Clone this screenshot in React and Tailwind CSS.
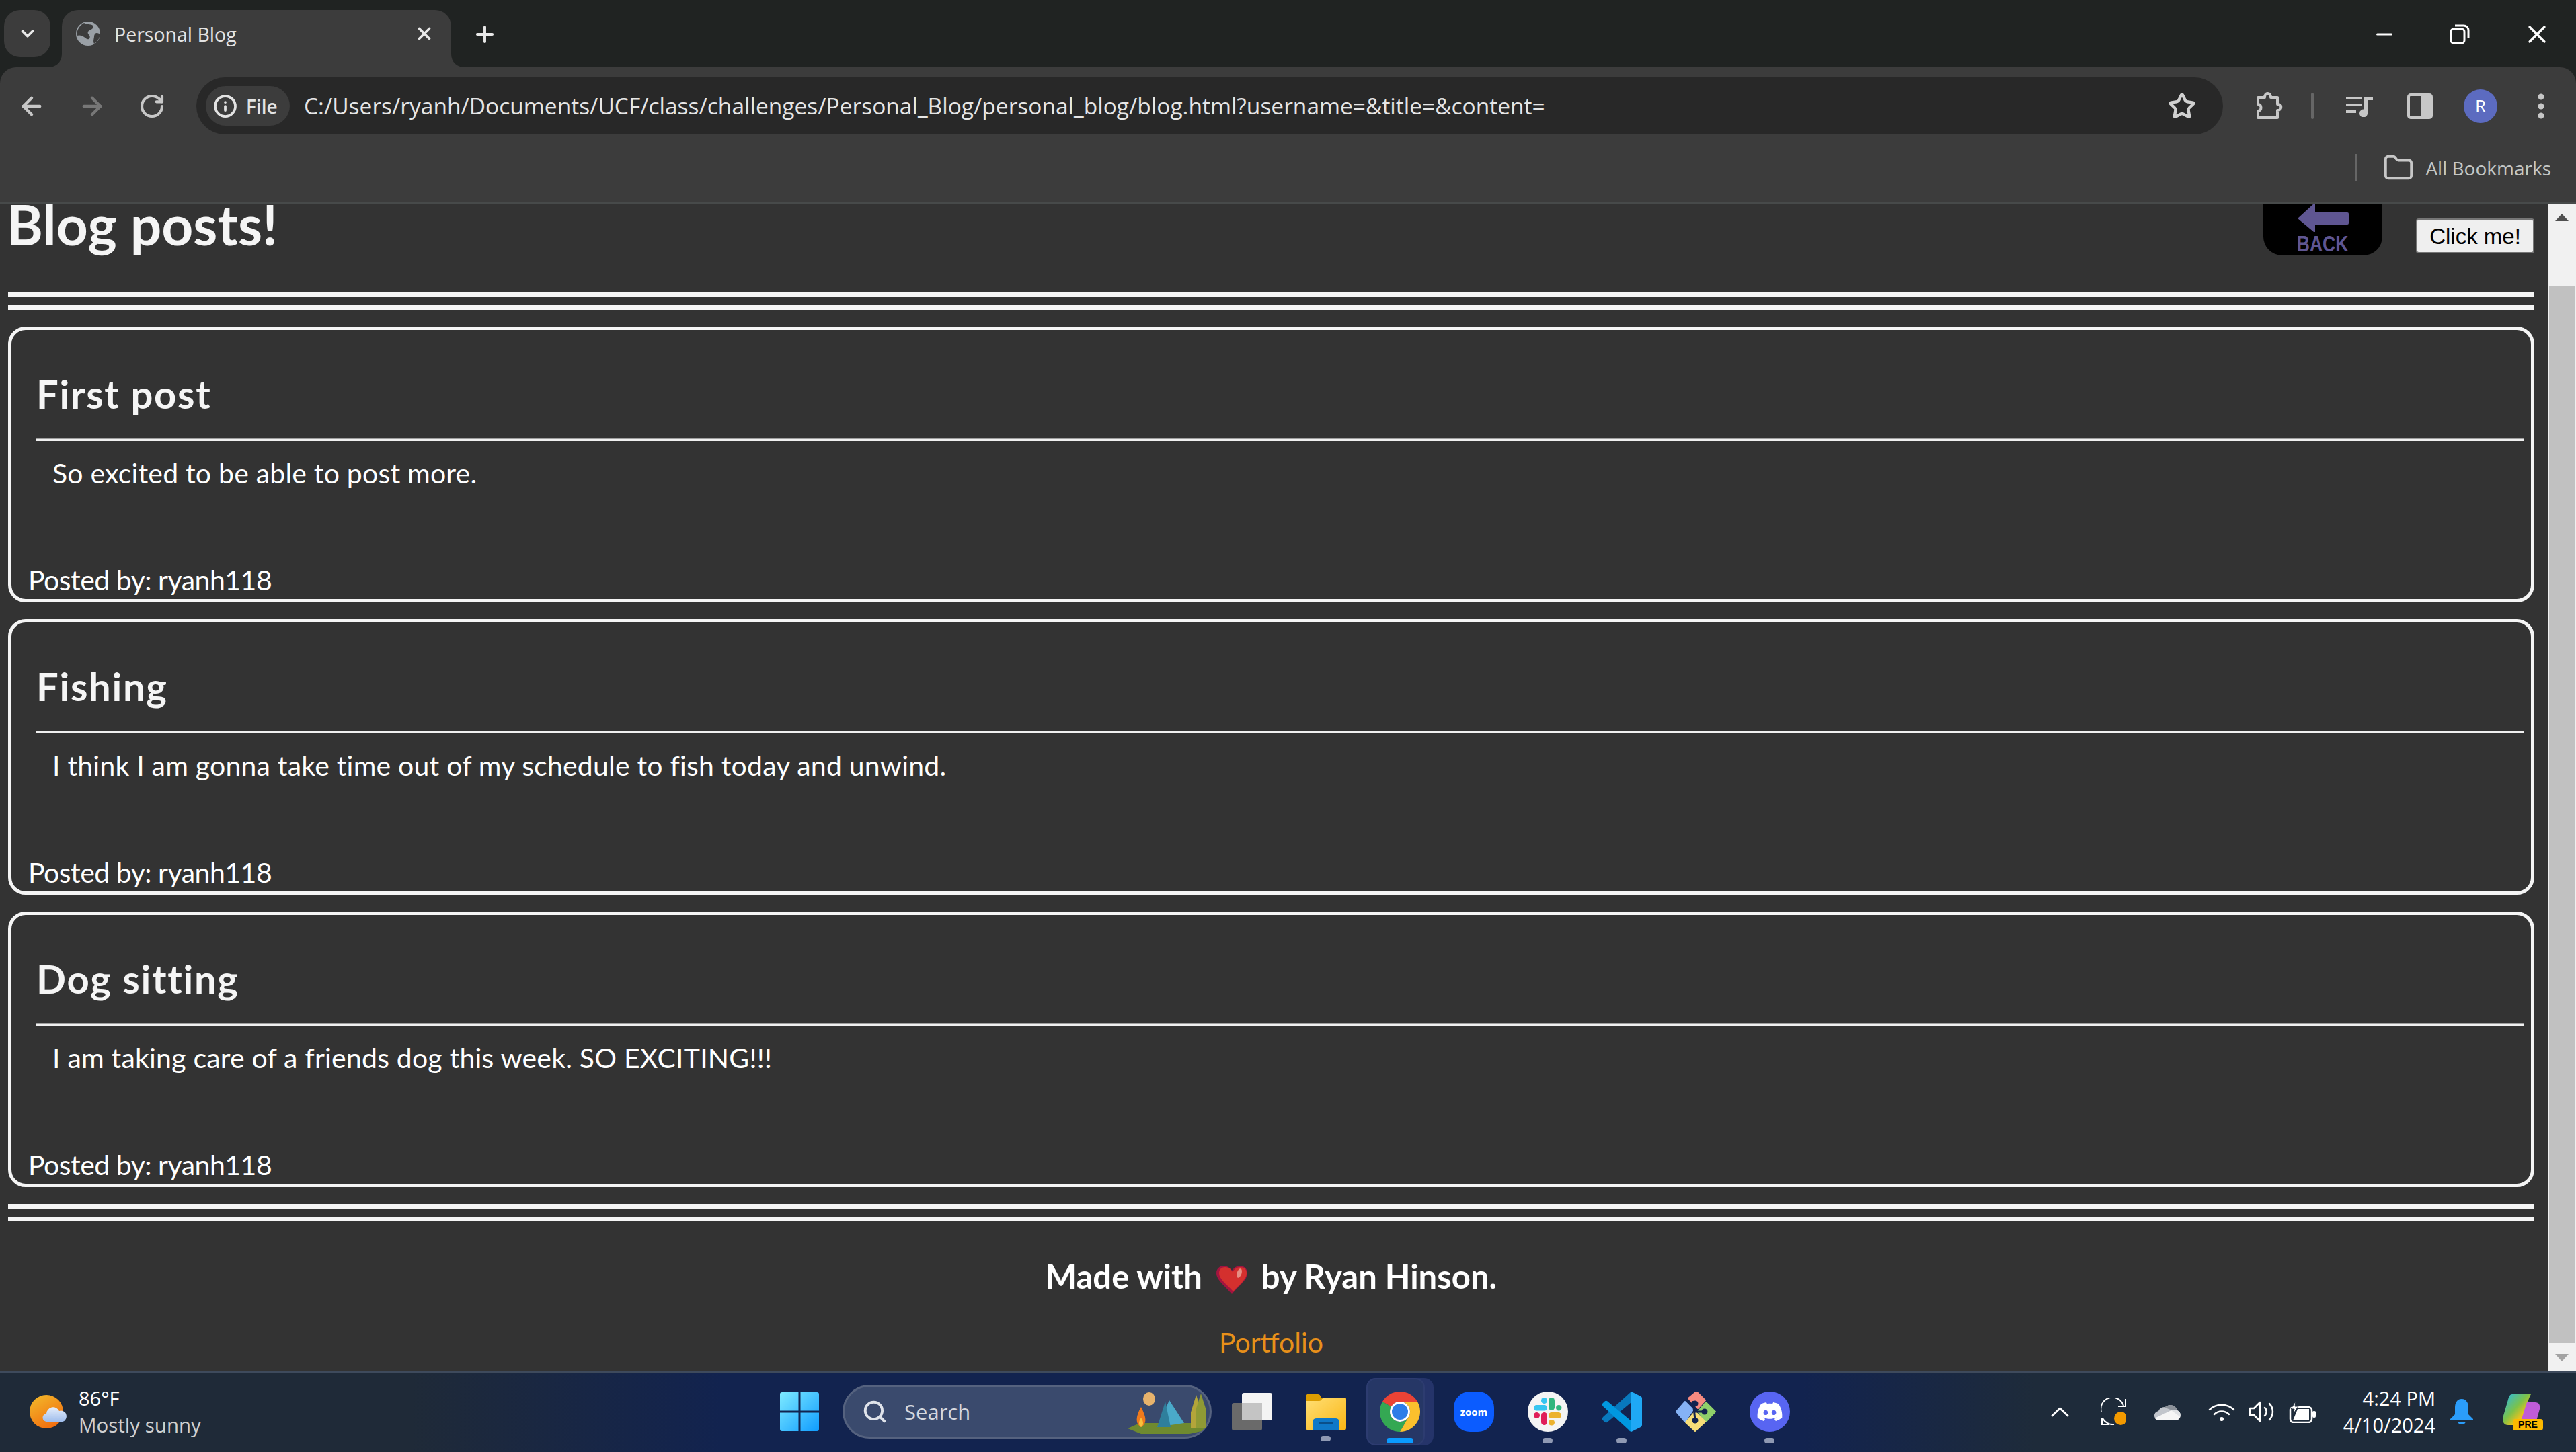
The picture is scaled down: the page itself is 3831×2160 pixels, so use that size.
import React from 'react';
import { ArrowLeft, ArrowRight, RotateCw, Info, Star, X, Plus, ChevronDown, Minus, Search, Folder } from 'lucide-react';
import { FaDiscord } from 'react-icons/fa';

const ui = { fontFamily: '"Open Sans", sans-serif' };

const posts = [
  { title: 'First post', body: 'So excited to be able to post more.' },
  { title: 'Fishing', body: 'I think I am gonna take time out of my schedule to fish today and unwind.' },
  { title: 'Dog sitting', body: 'I am taking care of a friends dog this week. SO EXCITING!!!' },
];

const Rule = () => <div className="h-[7px] bg-[#f5f5f5]" />;

const Post = ({ title, body }) => (
  <article className="h-[410px] border-[5px] border-[#f5f5f5] rounded-[26px] flex flex-col">
    <h2 className="ml-[37px] mt-[60px] text-[58px] leading-[70px] font-bold tracking-[1.7px] text-[#f5f5f5] font-['Lato',sans-serif]">{title}</h2>
    <div className="ml-[37px] mr-[11px] mt-[31px] h-[4px] bg-[#f0f0f0] border-t border-[#a0a0a0]" />
    <p className="ml-[61px] mt-[23px] text-[41px] leading-[50px] tracking-[0.2px] text-white font-['Lato',sans-serif]">{body}</p>
    <p className="mt-auto ml-[25px] mb-[3px] text-[41px] leading-[50px] tracking-[-0.5px] text-white font-['Lato',sans-serif]">Posted by: ryanh118</p>
  </article>
);

const Heart = () => (
  <svg width="48" height="42" viewBox="0 0 48 42" className="inline-block mx-[20px] align-[-8px]">
    <path d="M24 42C14 30 1 21 1 11 1 4 6 0 12 0c5 0 9 3 12 7 3-4 7-7 12-7 6 0 11 4 11 11 0 10-13 19-23 31z" fill="#a3143f" />
    <path d="M26 38C17 28 5 20 5 11 5 5 9 2 14 2c5 0 9 3 11 7 3-4 6-7 11-7 6 0 10 3 10 9 0 9-11 17-20 27z" fill="#d4302e" />
    <ellipse cx="35" cy="11" rx="3.5" ry="7" transform="rotate(18 35 11)" fill="#e58f84" />
  </svg>
);

const Tab = () => (
  <div className="h-[100px] bg-[#202322] flex items-start pt-[15px] pl-[6px] shrink-0">
    <div className="w-[69px] h-[70px] rounded-[24px] bg-[#3c3c3c] flex items-center justify-center text-[#e8e8e8]">
      <ChevronDown size={30} strokeWidth={3} />
    </div>
    <div className="relative ml-[17px] w-[579px] h-[85px] bg-[#3c3c3c] rounded-t-[24px] flex items-center pl-[21px] pb-[16px]">
      <svg width="20" height="20" viewBox="0 0 20 20" className="absolute left-[-20px] bottom-0"><path d="M20 0v20H0c12 0 20-8 20-20z" fill="#3c3c3c" /></svg>
      <svg width="20" height="20" viewBox="0 0 20 20" className="absolute right-[-20px] bottom-0"><path d="M0 0v20h20C8 20 0 12 0 0z" fill="#3c3c3c" /></svg>
      <svg width="36" height="36" viewBox="0 0 36 36">
        <circle cx="18" cy="18" r="18" fill="#9aa0a6" />
        <path d="M12 2c5 3 12 1 14 5 1 4-6 5-8 8-2 4 5 6 2 10-2 3-5 0-8-2-3-3-8-3-11-2 0-8 4-15 11-19zM31 17c2 0 4 1 5 2-1 6-4 11-9 14-2-4 0-8 0-11 0-3 2-5 4-5z" fill="#3c3c3c" />
      </svg>
      <span style={ui} className="ml-[21px] mt-[3px] text-[28.5px] text-[#e3e3e3] leading-none">Personal Blog</span>
      <X size={30} strokeWidth={3} className="absolute right-[25px] top-[20px] text-[#e8e8e8]" />
    </div>
    <Plus size={38} strokeWidth={2.5} className="ml-[31px] mt-[17px] text-[#e8e8e8]" />
    <div className="ml-auto flex items-center text-white pt-[14px]">
      <Minus size={36} strokeWidth={2} />
      <svg width="30" height="30" viewBox="0 0 30 30" fill="none" stroke="white" strokeWidth="3" className="ml-[79px]">
        <rect x="2" y="7" width="20" height="21" rx="4" />
        <path d="M8 2h13a7 7 0 0 1 7 7v12" />
      </svg>
      <X size={44} strokeWidth={1.8} className="ml-[78px] mr-[36px]" />
    </div>
  </div>
);

const Toolbar = () => (
  <div className="h-[100px] bg-[#3c3c3c] rounded-t-[24px] flex items-start pt-[15px] shrink-0">
    <div className="flex items-center h-[85px] text-[#c7c7c7] pl-[26px]">
      <ArrowLeft size={42} strokeWidth={2.5} />
      <ArrowRight size={42} strokeWidth={2.5} className="ml-[48px] text-[#777]" />
      <RotateCw size={40} strokeWidth={2.5} className="ml-[48px]" />
    </div>
    <div className="ml-[46px] w-[3014px] h-[85px] bg-[#282828] rounded-full flex items-center pl-[14px] pr-[40px]">
      <div className="h-[59px] w-[125px] bg-[#3c3c3c] rounded-full flex items-center pl-[11px] gap-[13px] text-[#e3e3e3]">
        <Info size={36} strokeWidth={2.5} />
        <span style={ui} className="text-[28px] font-semibold">File</span>
      </div>
      <span style={ui} className="ml-[21px] text-[33.5px] text-[#e6e6e6] whitespace-nowrap">C:/Users/ryanh/Documents/UCF/class/challenges/Personal_Blog/personal_blog/blog.html?username=&amp;title=&amp;content=</span>
      <Star size={42} strokeWidth={2.5} className="ml-auto text-[#d0d0d0]" />
    </div>
    <div className="flex items-center h-[85px] text-[#c7c7c7]">
      <svg width="44" height="44" viewBox="0 0 44 44" fill="none" stroke="#c7c7c7" strokeWidth="4" className="ml-[46px]">
        <path d="M6 9h10c0-8 9-8 9 0h10v10c7-1 7 9 0 9v11H6V29c6-1 6-9 0-10z" strokeLinejoin="round" />
      </svg>
      <div className="ml-[41px] w-[4px] h-[39px] rounded-full bg-[#666]" />
      <svg width="40" height="32" viewBox="0 0 40 32" fill="#c7c7c7" className="ml-[48px]">
        <path d="M0 2h23v4H0zM0 12h23v4H0zM0 22h15v4H0zM27 2h13v5h-8v19a6 6 0 1 1-5-5.5z" />
      </svg>
      <svg width="38" height="38" viewBox="0 0 38 38" className="ml-[51px]">
        <rect x="2" y="2" width="34" height="34" rx="3" fill="#3c3c3c" stroke="#c7c7c7" strokeWidth="4" />
        <rect x="21" y="2" width="15" height="34" fill="#c7c7c7" />
      </svg>
      <div style={ui} className="ml-[46px] w-[50px] h-[50px] rounded-full bg-[#5c6bc0] text-white text-[26px] flex items-center justify-center">R</div>
      <svg width="14" height="40" viewBox="0 0 14 40" fill="#c7c7c7" className="ml-[58px]">
        <circle cx="7" cy="6" r="4.500" /><circle cx="7" cy="20" r="4.500" /><circle cx="7" cy="34" r="4.500" />
      </svg>
    </div>
  </div>
);

const Bookmarks = () => (
  <div className="h-[100px] bg-[#3c3c3c] flex items-center justify-end pr-[37px] shrink-0">
    <div className="w-[3px] h-[40px] bg-[#666] mt-[-2px]" />
    <Folder size={46} strokeWidth={2} className="ml-[38px] text-[#c7c7c7]" />
    <span style={ui} className="ml-[17px] text-[28px] text-[#c4c7c5]">All Bookmarks</span>
  </div>
);

const Scrollbar = () => (
  <div className="w-[42px] bg-[#f1f1f1] flex flex-col items-center shrink-0">
    <div className="h-[42px] flex items-center justify-center">
      <div className="w-0 h-0 border-x-[10px] border-x-transparent border-b-[11px] border-b-[#505050]" />
    </div>
    <div className="w-[38px] h-[1578px] mt-[81px] bg-[#c1c1c1]" />
    <div className="mt-auto h-[42px] flex items-center justify-center">
      <div className="w-0 h-0 border-x-[10px] border-x-transparent border-t-[11px] border-t-[#a3a3a3]" />
    </div>
  </div>
);

const Page = () => (
  <div className="flex flex-1 min-h-0 border-t-[3px] border-[#474a4a]">
    <main className="flex-1 bg-[#333333] pl-[12px] pr-[20px] overflow-hidden">
      <header className="h-[132px] flex justify-between items-start">
        <h1 className="mt-[-20px] ml-[-2px] text-[82px] leading-[100px] font-bold text-[#f5f5f5] font-['Lato',sans-serif]">Blog posts!</h1>
        <div className="flex items-start">
          <div className="w-[177px] h-[77px] bg-black rounded-b-[28px] flex flex-col items-center text-[#5f5692]">
            <svg width="76" height="42" viewBox="0 0 76 42" fill="#5f5692"><path d="M0 22L24 0h2v13h48a2 2 0 0 1 2 2v14a2 2 0 0 1-2 2H26v11h-2z" /></svg>
            <span className="mt-[2px] text-[34px] leading-[30px] font-bold font-['Liberation_Sans',sans-serif] scale-x-[0.78]">BACK</span>
          </div>
          <button className="ml-[50px] mt-[22px] w-[176px] h-[52px] bg-[#efefef] border-2 border-[#767676] rounded-[4px] text-[33px] leading-none text-black font-['Liberation_Sans',sans-serif]">Click me!</button>
        </div>
      </header>
      <div className="flex flex-col gap-[12px]"><Rule /><Rule /></div>
      <div className="mt-[25px] flex flex-col gap-[25px]">
        {posts.map((p) => <Post key={p.title} {...p} />)}
      </div>
      <div className="mt-[25px] flex flex-col gap-[12px]"><Rule /><Rule /></div>
      <footer className="text-center font-['Lato',sans-serif]">
        <p className="mt-[51px] text-[49px] leading-[60px] font-bold text-white">Made with<Heart />by Ryan Hinson.</p>
        <a className="block mt-[44px] text-[41px] leading-[50px] text-[#e8901a]">Portfolio</a>
      </footer>
    </main>
    <Scrollbar />
  </div>
);

const Dot = () => <span className="absolute left-[22px] bottom-[-17px] w-[15px] h-[8px] rounded-full bg-[#8f99b3]" />;

const Taskbar = () => (
  <div className="h-[120px] shrink-0 border-t-[3px] border-[#3e4a5c] bg-[linear-gradient(90deg,#1f2a38_16%,#12234f_28%,#12234f_70%,#1e2b3a_79%)] flex items-center pb-[3px]">
    <svg width="56" height="50" viewBox="0 0 56 50" className="ml-[44px]">
      <defs>
        <linearGradient id="sun" x1="0" y1="0" x2="0.6" y2="1"><stop offset="0" stopColor="#f2bd2c" /><stop offset="1" stopColor="#f26f0f" /></linearGradient>
        <linearGradient id="cloud" x1="0" y1="0" x2="0" y2="1"><stop offset="0" stopColor="#e6eefb" /><stop offset="1" stopColor="#9fbdec" /></linearGradient>
      </defs>
      <circle cx="25" cy="25" r="25" fill="url(#sun)" />
      <path d="M26 40a6 6 0 0 1-1-12 10 10 0 0 1 19-4 8 8 0 0 1 5 16z" fill="url(#cloud)" />
    </svg>
    <div style={ui} className="ml-[17px] mt-[-1px] w-[200px] flex flex-col">
      <span className="text-[29px] leading-[40px] text-white">86°F</span>
      <span className="text-[29.5px] leading-[40px] text-[#cfcfcf] whitespace-nowrap">Mostly sunny</span>
    </div>
    {/* start + search */}
    <svg width="58" height="58" viewBox="0 0 58 58" className="ml-[843px]">
      <defs>
        <linearGradient id="win" x1="0" y1="0" x2="1" y2="1"><stop offset="0" stopColor="#7eeaff" /><stop offset="1" stopColor="#0f9cff" /></linearGradient>
      </defs>
      <path d="M0 3a3 3 0 0 1 3-3h24.500v27.500H0zM30.500 0H55a3 3 0 0 1 3 3v24.500H30.500zM0 30.500h27.500V58H3a3 3 0 0 1-3-3zM30.500 30.500H58V55a3 3 0 0 1-3 3H30.500z" fill="url(#win)" />
    </svg>
    <div className="ml-[35px] w-[549px] h-[80px] rounded-full bg-[#3a4a6d] border-[3px] border-[#55627f] flex items-center pl-[26px] relative">
      <Search size={38} strokeWidth={2.5} className="text-[#dfe3ea]" />
      <span style={ui} className="ml-[25px] text-[31px] text-[#d3d7de]">Search</span>
      <svg width="122" height="70" viewBox="0 0 122 70" className="absolute right-[2px] top-[2px]">
        <path d="M2 60l18-8h84l16 4-8 8-18 4H22z" fill="#6f8a2f" />
        <ellipse cx="34" cy="16" rx="9" ry="10" fill="#e7b36c" />
        <path d="M96 60V36l8-26 8 26v24z" fill="#b3a53a" /><path d="M104 60V30l7-22 7 22v30z" fill="#8f9a35" />
        <path d="M46 58L64 18l22 34z" fill="#4aa9c9" /><path d="M46 58l12-38 8 38z" fill="#2f7f9c" />
        <path d="M22 58c-9-5-8-16 0-30 7 14 10 24 0 30z" fill="#f07a1c" /><path d="M22 58c-4-3-4-8 0-14 4 6 4 11 0 14z" fill="#f9c23c" />
      </svg>
    </div>
    {/* pinned apps */}
    <div className="ml-[30px] flex items-center">
      <svg width="60" height="56" viewBox="0 0 60 56">
        <rect x="15" y="0" width="45" height="41" rx="3" fill="#f4f4f4" />
        <rect x="0" y="15" width="45" height="41" rx="3" fill="#6a6a6a" />
        <rect x="15" y="15" width="30" height="26" fill="#c4c4c4" />
      </svg>
      <div className="relative ml-[50px] w-[60px] h-[53px]">
        <svg width="60" height="53" viewBox="0 0 60 53">
          <defs><linearGradient id="fold" x1="0" y1="0" x2="1" y2="1"><stop offset="0" stopColor="#ffdf75" /><stop offset="1" stopColor="#fbb614" /></linearGradient></defs>
          <path d="M2 0h16c3 0 4 3 6 6h36v10H0V2z" fill="#dc9d00" />
          <path d="M0 10h20c3 0 4-4 6-4h32a2 2 0 0 1 2 2v43a2 2 0 0 1-2 2H2a2 2 0 0 1-2-2z" fill="url(#fold)" />
          <path d="M10 41a6 6 0 0 1 6-5h28a6 6 0 0 1 6 5v12H10z" fill="#0f78c8" />
          <path d="M19 43h22" stroke="#0a4f8a" strokeWidth="2" />
        </svg>
        <Dot />
      </div>
      <div className="relative ml-[30px] w-[100px] h-[100px] rounded-[14px] bg-[#25346a] flex items-center justify-center">
        <span className="absolute left-0 top-0 w-[87px] h-[100px] rounded-[14px] bg-[#263766] border-2 border-[#2d3c70]" />
        <svg width="60" height="60" viewBox="0 0 60 60" className="relative">
          <path d="M30 15H56A30 30 0 0 0 4 15L17 22.500A15 15 0 0 1 30 15z" fill="#ea4335" />
          <path d="M17 22.500L4 15A30 30 0 0 0 30 60L43 37.500A15 15 0 0 1 17 22.500z" fill="#34a853" />
          <path d="M30 15H56A30 30 0 0 1 30 60L43 37.500A15 15 0 0 0 30 15z" fill="#fbc02d" />
          <circle cx="30" cy="30" r="15" fill="white" /><circle cx="30" cy="30" r="12" fill="#2d7de8" />
        </svg>
        <span className="absolute left-[30px] bottom-[3px] w-[40px] h-[8px] rounded-full bg-[#0a9bff]" />
      </div>
      <div style={ui} className="ml-[30px] w-[60px] h-[60px] rounded-[24px] bg-[#0b5cff] text-white text-[15px] font-bold flex items-center justify-center">zoom</div>
      <div className="relative ml-[50px] w-[60px] h-[60px] rounded-full bg-[#f4f4f4]">
        <svg width="60" height="60" viewBox="0 0 60 60">
          <rect x="20" y="9" width="9" height="9" rx="4.500" fill="#36c5f0" /><rect x="9" y="20" width="20" height="8.500" rx="4.200" fill="#36c5f0" />
          <rect x="31" y="9" width="9" height="19" rx="4.500" fill="#2eb67d" /><rect x="42" y="20" width="8.500" height="8.500" rx="4.200" fill="#2eb67d" />
          <rect x="31" y="31" width="19" height="9" rx="4.500" fill="#ecb22e" /><rect x="31" y="42" width="9" height="8.500" rx="4.200" fill="#ecb22e" />
          <rect x="9" y="31" width="9" height="9" rx="4.500" fill="#e01e5a" /><rect x="20" y="31" width="9" height="19" rx="4.500" fill="#e01e5a" />
        </svg>
        <Dot />
      </div>
      <div className="relative ml-[50px] w-[60px] h-[60px]">
        <svg width="60" height="60" viewBox="0 0 60 60">
          <path d="M44 0V16L8 46Q6 47 4 45L1 42Q0 40 2 38z" fill="#0878bd" />
          <path d="M2 22Q0 20 1 18L4 15Q6 13 8 14L44 44V60Q42 60 40 57z" fill="#0098e0" />
          <path d="M44 0L58 7Q60 8 60 10V50Q60 52 58 53L44 60z" fill="#1fa8f5" />
        </svg>
        <Dot />
      </div>
      <svg width="60" height="60" viewBox="0 0 60 60" className="ml-[50px]">
        <path d="M19 10L31 0l13 13-11 12z" fill="#f58a80" stroke="#f58a80" strokeWidth="2" strokeLinejoin="round" />
        <path d="M1 30l13-15 12 12-12 18z" fill="#85b2f5" stroke="#85b2f5" strokeWidth="2" strokeLinejoin="round" />
        <path d="M45 16l14 14-14 15-12-15z" fill="#8fd06a" stroke="#8fd06a" strokeWidth="2" strokeLinejoin="round" />
        <path d="M15 46l14-16 15 15-15 14z" fill="#f7dd78" stroke="#f7dd78" strokeWidth="2" strokeLinejoin="round" />
        <path d="M26 14l3 29M29 30l14 0" stroke="#12234f" strokeWidth="3" fill="none" />
        <circle cx="29" cy="18" r="4.500" fill="#12234f" /><circle cx="43" cy="30" r="4.500" fill="#12234f" /><circle cx="29" cy="43" r="4.500" fill="#12234f" />
      </svg>
      <div className="relative ml-[50px] w-[60px] h-[60px] rounded-full bg-[#5865f2] flex items-center justify-center">
        <FaDiscord size={40} className="text-white" />
        <Dot />
      </div>
    </div>
    {/* tray */}
    <div className="ml-auto flex items-center pr-[49px] text-white">
      <svg width="27" height="15" viewBox="0 0 27 15" fill="none" stroke="white" strokeWidth="3" strokeLinecap="round" strokeLinejoin="round">
        <path d="M2 13L13.500 2 25 13" />
      </svg>
      <svg width="38" height="40" viewBox="0 0 38 40" fill="none" stroke="white" strokeWidth="2" className="ml-[47px]">
        <path d="M1 21A17 17 0 0 1 34 11M37 1v11H26M2 29v10h10M3 30A17 17 0 0 0 20 39" />
        <circle cx="30" cy="30" r="10" fill="#f39a00" stroke="none" />
      </svg>
      <svg width="40" height="26" viewBox="0 0 40 26" className="ml-[42px]">
        <defs>
          <clipPath id="od"><path d="M8 26a7 7 0 0 1-2-14 10 10 0 0 1 10-6 11 11 0 0 1 18 5 8 8 0 0 1-1 15z" /></clipPath>
        </defs>
        <g clipPath="url(#od)">
          <rect width="40" height="26" fill="#c2c6cc" />
          <path d="M10 0h30v9l-14 2-10-4z" fill="#8b9199" />
          <path d="M25 11l15 0v13z" fill="#e0e2e5" />
          <path d="M0 26v-3l25-12 15 11v4z" fill="#f6f6f6" />
        </g>
      </svg>
      <svg width="40" height="28" viewBox="0 0 40 28" fill="none" stroke="white" strokeWidth="2.500" strokeLinecap="round" className="ml-[40px]">
        <path d="M2 11A26 26 0 0 1 38 11M9 18A16 16 0 0 1 31 18" />
        <circle cx="20" cy="25" r="3" fill="white" stroke="none" />
      </svg>
      <svg width="40" height="34" viewBox="0 0 40 34" fill="none" stroke="white" strokeWidth="2.500" strokeLinecap="round" strokeLinejoin="round" className="ml-[20px]">
        <path d="M2 12H8L17 3V31L8 22H2z" />
        <path d="M24 11A8 8 0 0 1 24 23M31 5A17 17 0 0 1 31 29" />
      </svg>
      <svg width="40" height="33" viewBox="0 0 40 33" fill="none" stroke="white" strokeWidth="2.500" className="ml-[20px]">
        <rect x="2" y="9" width="32" height="23" rx="5" />
        <rect x="35" y="15" width="5" height="10" rx="2" fill="white" stroke="none" />
        <path d="M13 12h17v17H6z" fill="white" stroke="none" />
        <path d="M10 0L3 12h5L6 20l8-12H9z" fill="white" stroke="#1e2b3a" strokeWidth="1" />
      </svg>
      <div style={ui} className="mt-[-1px] flex flex-col items-end text-[29px] leading-[40px] whitespace-nowrap w-[178px]">
        <span>4:24 PM</span>
        <span>4/10/2024</span>
      </div>
      <svg width="34" height="38" viewBox="0 0 34 38" fill="#2b9dfa" className="ml-[22px]">
        <path d="M17 0c7 0 10 6 10 13v10l7 7v2H0v-2l7-7V13C7 6 10 0 17 0z" />
        <path d="M11 34h12c-1 3-3 4-6 4s-5-1-6-4z" />
      </svg>
      <div className="relative ml-[44px] w-[60px] h-[56px]">
        <svg width="56" height="50" viewBox="0 0 56 50">
          <defs>
            <linearGradient id="cop" x1="0" y1="0" x2="1" y2="1">
              <stop offset="0" stopColor="#22b8f0" /><stop offset="0.45" stopColor="#7cc24a" /><stop offset="0.7" stopColor="#f2c21a" /><stop offset="1" stopColor="#f0559a" />
            </linearGradient>
          </defs>
          <path d="M14 2h28c-4 6-8 22-12 38-1 5-4 8-10 8H8C0 48-1 40 1 34L8 10c1-5 3-8 6-8z" fill="url(#cop)" />
          <path d="M36 14h12c6 0 8 4 7 10l-5 18c-1 5-4 7-9 7H24c4-8 8-24 12-35z" fill="#c05cd8" />
        </svg>
        <span className="absolute right-0 bottom-0 w-[45px] h-[17px] rounded-[4px] bg-[#fdb900] text-black text-[14px] leading-[17px] font-bold text-center font-['Liberation_Sans',sans-serif]">PRE</span>
      </div>
    </div>
  </div>
);

export default function App() {
  return (
    <div className="w-[3831px] h-[2160px] flex flex-col overflow-hidden bg-[#202322]">
      <Tab />
      <Toolbar />
      <Bookmarks />
      <Page />
      <Taskbar />
    </div>
  );
}
